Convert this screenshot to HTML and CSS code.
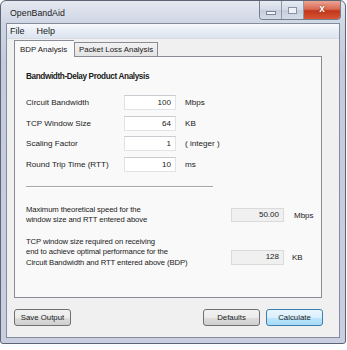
FILE: index.html
```html
<!DOCTYPE html>
<html>
<head>
<meta charset="utf-8">
<link rel="stylesheet" href="styles.css">
</head>
<body>
<div class="window">
  <div class="titlebar">
    <span class="title">OpenBandAid</span>
    <div class="caption-btns">
      <div class="cbtn min"><span class="min-glyph"></span></div>
      <div class="cbtn max"><span class="max-glyph"></span></div>
      <div class="cbtn close"><span class="close-glyph">x</span></div>
    </div>
  </div>
  <div class="client">
    <div class="menubar">
      <span class="menu-item">File</span>
      <span class="menu-item">Help</span>
    </div>
    <div class="tabs">
      <div class="tab active">BDP Analysis</div>
      <div class="tab">Packet Loss Analysis</div>
    </div>
    <div class="panel">
      <div class="heading">Bandwidth-Delay Product Analysis</div>
      <div class="form">
        <span class="lbl">Circuit Bandwidth</span><span class="inp">100</span><span class="unit">Mbps</span>
        <span class="lbl">TCP Window Size</span><span class="inp">64</span><span class="unit">KB</span>
        <span class="lbl">Scaling Factor</span><span class="inp">1</span><span class="unit">( integer )</span>
        <span class="lbl">Round Trip Time (RTT)</span><span class="inp">10</span><span class="unit">ms</span>
      </div>
      <div class="divider"></div>
      <div class="result r1">
        <div class="rtext">Maximum theoretical speed for the<br>window size and RTT entered above</div>
        <span class="out">50.00</span><span class="unit">Mbps</span>
      </div>
      <div class="result r2">
        <div class="rtext">TCP window size required on receiving<br>end to achieve optimal performance for the<br>Circuit Bandwidth and RTT entered above (BDP)</div>
        <span class="out">128</span><span class="unit">KB</span>
      </div>
    </div>
    <div class="buttons">
      <button class="btn save">Save Output</button>
      <span class="spacer"></span>
      <button class="btn defaults">Defaults</button>
      <button class="btn calc">Calculate</button>
    </div>
  </div>
</div>
</body>
</html>
```
FILE: styles.css
```css
html, body {
  margin: 0;
  padding: 0;
  background: #ffffff;
}
body {
  font-family: "Liberation Sans", Arial, sans-serif;
  font-size: 8px;
  color: #1a1a1a;
}
.window {
  width: 346px;
  height: 344px;
  box-sizing: border-box;
  border: 1px solid #5d6575;
  border-radius: 6px 6px 3px 3px;
  background: linear-gradient(180deg, #e4e9f1 0px, #cfd6e4 22px, #c4cbdc 60px, #c9cfe0 100%);
  padding: 0 5px 5px 5px;
  display: flex;
  flex-direction: column;
}
.titlebar {
  height: 22px;
  display: flex;
  align-items: flex-start;
}
.title {
  font-size: 8.8px;
  margin: 7px 0 0 4px;
  color: #1b1b1b;
}
.caption-btns {
  margin-left: auto;
  margin-right: -1px;
  display: flex;
  height: 18px;
  border: 1px solid #76808f;
  border-top: none;
  border-radius: 0 0 4px 4px;
  overflow: hidden;
}
.cbtn {
  display: flex;
  align-items: center;
  justify-content: center;
  height: 18px;
}
.min, .max {
  width: 21px;
  background: linear-gradient(180deg, #e6ebf3 0%, #d3dae6 50%, #c6cedd 51%, #d4dbe8 100%);
  border-right: 1px solid #8e98a8;
}
.min-glyph {
  width: 8px;
  height: 2px;
  margin-top: 5px;
  background: #f4f6fa;
  border: 1px solid #7a8494;
}
.max-glyph {
  width: 7px;
  height: 5px;
  border: 1px solid #8a93a2;
  background: #eef1f6;
}
.close {
  width: 36px;
  background: linear-gradient(180deg, #eaa494 0%, #d96a52 45%, #c2361b 55%, #d65636 100%);
}
.close-glyph {
  color: #ffffff;
  font-weight: bold;
  font-size: 10px;
  line-height: 10px;
  margin-top: -2px;
  text-shadow: 0 0 2px #7a2010;
}
.client {
  flex: 1;
  border: 1px solid #848c9c;
  background: #f0f0f0;
  display: flex;
  flex-direction: column;
}
.menubar {
  height: 14px;
  display: flex;
  align-items: center;
  gap: 12px;
  padding-left: 3px;
  font-size: 9px;
  background: linear-gradient(180deg, #f7f9fc 0%, #e8edf5 50%, #dce4ef 100%);
  border-bottom: 1px solid #d7dde6;
}
.tabs {
  display: flex;
  align-items: flex-end;
  padding-left: 7px;
  height: 17px;
  position: relative;
  z-index: 1;
}
.tab {
  height: 13px;
  padding: 0 4px;
  display: flex;
  align-items: center;
  border: 1px solid #898c95;
  border-bottom: none;
  background: linear-gradient(180deg, #f2f2f2, #e3e3e3);
  font-size: 7.9px;
}
.tab.active {
  height: 17px;
  width: 60px;
  box-sizing: border-box;
  background: #f9f9f9;
  padding: 0 0 0 5px;
  margin-bottom: -1px;
  border-right: none;
}
.panel {
  width: 295px;
  height: 240px;
  margin-left: 7px;
  border: 1px solid #898c95;
  background: #f9f9f9;
  padding: 0 0 0 11px;
  display: flex;
  flex-direction: column;
}
.heading {
  font-weight: bold;
  font-size: 8.2px;
  letter-spacing: -0.38px;
  margin-top: 15px;
  height: 12px;
}
.form {
  display: grid;
  grid-template-columns: 89px 52px auto;
  column-gap: 9px;
  row-gap: 5.6px;
  margin-top: 11px;
  align-items: center;
  font-size: 8.1px;
}
.inp {
  height: 15px;
  box-sizing: border-box;
  background: #ffffff;
  border: 1px solid #e2e3e6;
  border-top-color: #c9cbd0;
  text-align: right;
  padding-right: 4px;
  line-height: 13px;
}
.divider {
  width: 187px;
  height: 0;
  border-top: 1px solid #a6a6a6;
  border-bottom: 1px solid #ffffff;
  margin-top: 14px;
}
.result {
  display: flex;
  align-items: center;
}
.r1 { margin-top: 17px; }
.r2 { margin-top: 11px; }
.rtext {
  width: 205px;
  line-height: 10.5px;
  font-size: 7.7px;
  letter-spacing: -0.1px;
}
.out {
  width: 53px;
  height: 14px;
  box-sizing: border-box;
  background: #f0f0f0;
  border: 1px solid #dadada;
  text-align: right;
  padding-right: 4px;
  line-height: 12px;
}
.r2 .out { margin-top: 10px; height: 15px; }
.result .unit { margin-left: 10px; }
.r2 .unit { margin-top: 10px; margin-left: 8px; }
.buttons {
  display: flex;
  padding: 11px 0 0 7px;
}
.spacer { flex: 1; }
.btn {
  height: 17px;
  font-family: "Liberation Sans", Arial, sans-serif;
  font-size: 7.8px;
  color: #1a1a1a;
  border: 1px solid #707070;
  border-radius: 3px;
  background: linear-gradient(180deg, #f2f2f2 0%, #ebebeb 50%, #dddddd 51%, #cfcfcf 100%);
  padding: 0;
  margin: 0;
}
.save { width: 57px; }
.defaults { width: 57px; margin-right: 6px; }
.calc {
  width: 57px;
  margin-right: 16px;
  border-color: #3c7fb1;
  background: linear-gradient(180deg, #eaf6fd 0%, #d9f0fc 50%, #bee6fd 51%, #a7d9f5 100%);
}
```
